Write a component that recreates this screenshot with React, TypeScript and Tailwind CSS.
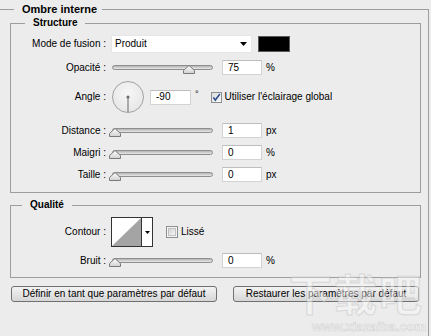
import React from "react";

function Field({ value, className = "" }: { value: string; className?: string }) {
  return (
    <div
      className={
        "flex h-[15px] items-center border border-[#d3d3d3] border-t-[#bdbdbd] bg-white pl-[5px] text-[10px] leading-none text-black " +
        className
      }
    >
      {value}
    </div>
  );
}

function Slider({ thumb }: { thumb: string }) {
  return (
    <div className="relative ml-[1px] h-[15px] w-[101px] shrink-0">
      <div className="absolute left-0 right-0 top-[5px] h-[5px] rounded-full border border-[#8e8e8e] bg-linear-to-b from-[#b4b4b4] to-[#e8e8e8]" />
      <svg className={"absolute top-[5px] " + thumb} width="12" height="9" viewBox="0 0 12 9">
        <defs>
          <linearGradient id="tg" x1="0" y1="0" x2="0" y2="1">
            <stop offset="0" stopColor="#ffffff" />
            <stop offset="1" stopColor="#d0d0d0" />
          </linearGradient>
        </defs>
        <path d="M6 0.5 L11.5 5.5 V8.5 H0.5 V5.5 Z" fill="url(#tg)" stroke="#7a7a7a" strokeLinejoin="round" />
      </svg>
    </div>
  );
}

function Label({ children }: { children: React.ReactNode }) {
  return <div className="w-[95px] shrink-0 text-right text-[10px] leading-none text-black">{children}</div>;
}

export default function App() {
  return (
    <div className="relative h-[336px] w-[431px] overflow-hidden bg-[#ececec] font-['Liberation_Sans',Arial,sans-serif] text-[10px] text-black">
      <fieldset className="-ml-[2px] mt-[3px] w-[431px] border border-[#9d9d9d] pb-[60px] pl-[11px] pr-[7px]">
        <legend className="ml-[4px] pl-[8px] pr-[5px] text-[11px] font-bold leading-[12px]">Ombre interne</legend>

        {/* Structure */}
        <fieldset className="mt-[2px] border border-[#9d9d9d] pb-[10px]">
          <legend className="ml-[14px] pl-[8px] pr-[8px] text-[10px] font-bold leading-[12px]">Structure</legend>
          <div className="flex flex-col">
            {/* Mode de fusion */}
            <div className="mt-[6px] flex h-[18px] items-center gap-[5px]">
              <Label>Mode de fusion :</Label>
              <div className="flex h-[18px] w-[141px] items-center justify-between border border-[#e6e6e6] bg-white pl-[3px] pr-[4px]">
                <span className="text-[10px] leading-none">Produit</span>
                <svg width="7" height="4" viewBox="0 0 7 4">
                  <path d="M0 0 H7 L3.5 4 Z" fill="#000" />
                </svg>
              </div>
              <div className="ml-[1px] h-[16px] w-[32px] border border-[#5a5a5a] bg-black" />
            </div>

            {/* Opacité */}
            <div className="mt-[7px] flex h-[15px] items-center gap-[5px]">
              <Label>Opacité :</Label>
              <Slider thumb="left-[71px]" />
              <Field value="75" className="ml-[4px] w-[40px]" />
              <span className="ml-[-1px] leading-none">%</span>
            </div>

            {/* Angle */}
            <div className="mt-[6px] flex h-[32px] items-center gap-[5px]">
              <Label>Angle :</Label>
              <svg className="ml-[1px] shrink-0" width="32" height="32" viewBox="0 0 32 32">
                <defs>
                  <radialGradient id="dg" cx="0.5" cy="0.4" r="0.6">
                    <stop offset="0" stopColor="#f7f7f7" />
                    <stop offset="1" stopColor="#e6e6e6" />
                  </radialGradient>
                </defs>
                <circle cx="16" cy="16" r="15.5" fill="url(#dg)" stroke="#a3a3a3" />
                <line x1="16" y1="16" x2="16" y2="31" stroke="#7d7d7d" strokeWidth="1.2" />
                <circle cx="16" cy="16" r="1.6" fill="#6f6f6f" />
              </svg>
              <Field value="-90" className="ml-[1px] w-[41px]" />
              <span className="-mt-[6px] ml-[-1px] text-[9px] leading-none">°</span>
              <svg className="ml-[7px] shrink-0" width="11" height="11" viewBox="0 0 11 11">
                <defs>
                  <linearGradient id="cg" x1="0" y1="0" x2="1" y2="1">
                    <stop offset="0" stopColor="#dcdcdc" />
                    <stop offset="1" stopColor="#fafafa" />
                  </linearGradient>
                </defs>
                <rect x="0.5" y="0.5" width="10" height="10" fill="url(#cg)" stroke="#8c8e94" />
                <path d="M2.4 5.4 L4.3 8.2 L8.8 2" fill="none" stroke="#2c4a8e" strokeWidth="1.6" />
              </svg>
              <span className="ml-[-2px] leading-none">Utiliser l'éclairage global</span>
            </div>

            {/* Distance */}
            <div className="mt-[10px] flex h-[15px] items-center gap-[5px]">
              <Label>Distance :</Label>
              <Slider thumb="left-[-3px]" />
              <Field value="1" className="ml-[4px] w-[40px]" />
              <span className="ml-[-1px] leading-none">px</span>
            </div>

            {/* Maigri */}
            <div className="mt-[7px] flex h-[15px] items-center gap-[5px]">
              <Label>Maigri :</Label>
              <Slider thumb="left-[-3px]" />
              <Field value="0" className="ml-[4px] w-[40px]" />
              <span className="ml-[-1px] leading-none">%</span>
            </div>

            {/* Taille */}
            <div className="mt-[7px] flex h-[15px] items-center gap-[5px]">
              <Label>Taille :</Label>
              <Slider thumb="left-[-3px]" />
              <Field value="0" className="ml-[4px] w-[40px]" />
              <span className="ml-[-1px] leading-none">px</span>
            </div>
          </div>
        </fieldset>

        {/* Qualité */}
        <fieldset className="mt-[6px] border border-[#9d9d9d] pb-[9px]">
          <legend className="ml-[11px] pl-[8px] pr-[8px] text-[10px] font-bold leading-[12px]">Qualité</legend>
          <div className="flex flex-col">
            <div className="mt-[6px] flex h-[30px] items-center gap-[5px]">
              <Label>Contour :</Label>
              <div className="flex h-[30px] w-[42px] shrink-0 border border-[#333] bg-white">
                <svg width="29" height="28" viewBox="0 0 29 28" className="shrink-0">
                  <polygon points="0,28 29,0 29,28" fill="#a4a4a4" />
                </svg>
                <div className="w-px bg-[#333]" />
                <div className="flex flex-1 items-center justify-center">
                  <svg width="5" height="3" viewBox="0 0 5 3">
                    <path d="M0 0 H5 L2.5 3 Z" fill="#000" />
                  </svg>
                </div>
              </div>
              <svg className="ml-[8px] shrink-0" width="12" height="12" viewBox="0 0 12 12">
                <defs>
                  <linearGradient id="lg" x1="0" y1="0" x2="1" y2="1">
                    <stop offset="0" stopColor="#cfcfcf" />
                    <stop offset="1" stopColor="#fbfbfb" />
                  </linearGradient>
                </defs>
                <rect x="0.5" y="0.5" width="11" height="11" fill="#f4f4f4" stroke="#8e8f8f" />
                <rect x="2.5" y="2.5" width="7" height="7" fill="url(#lg)" stroke="#c2c2c2" />
              </svg>
              <span className="ml-[-2px] leading-none">Lissé</span>
            </div>
            <div className="mt-[6px] flex h-[15px] items-center gap-[5px]">
              <Label>Bruit :</Label>
              <Slider thumb="left-[-3px]" />
              <Field value="0" className="ml-[4px] w-[40px]" />
              <span className="ml-[-1px] leading-none">%</span>
            </div>
          </div>
        </fieldset>

        {/* Buttons */}
        <div className="mt-[8px] flex gap-[16px] pl-[1px]">
          <button className="flex h-[16px] w-[206px] items-center justify-center rounded-[3px] border border-[#707070] bg-linear-to-b from-[#f3f3f3] to-[#d6d6d6] text-[10px] leading-none text-black">
            Définir en tant que paramètres par défaut
          </button>
          <button className="flex h-[16px] w-[186px] items-center justify-center rounded-[3px] border border-[#707070] bg-linear-to-b from-[#f3f3f3] to-[#d6d6d6] text-[10px] leading-none text-black">
            Restaurer les paramètres par défaut
          </button>
        </div>
      </fieldset>

      {/* Watermark */}
      <div aria-hidden="true" className="pointer-events-none absolute left-[289px] top-[271px] font-['Noto_Sans_CJK_SC',sans-serif] text-[43px] font-bold leading-none tracking-[2px] text-[#f8f8f8] opacity-50 [-webkit-text-stroke:1px_#c4c4c4]">
        下载吧
      </div>
      <div aria-hidden="true" className="pointer-events-none absolute left-[312px] top-[320px] font-['Liberation_Sans',Arial,sans-serif] text-[13px] font-bold leading-none text-[#f8f8f8] opacity-60 [-webkit-text-stroke:0.6px_#c4c4c4]">
        www.xiazaiba.com
      </div>
    </div>
  );
}
